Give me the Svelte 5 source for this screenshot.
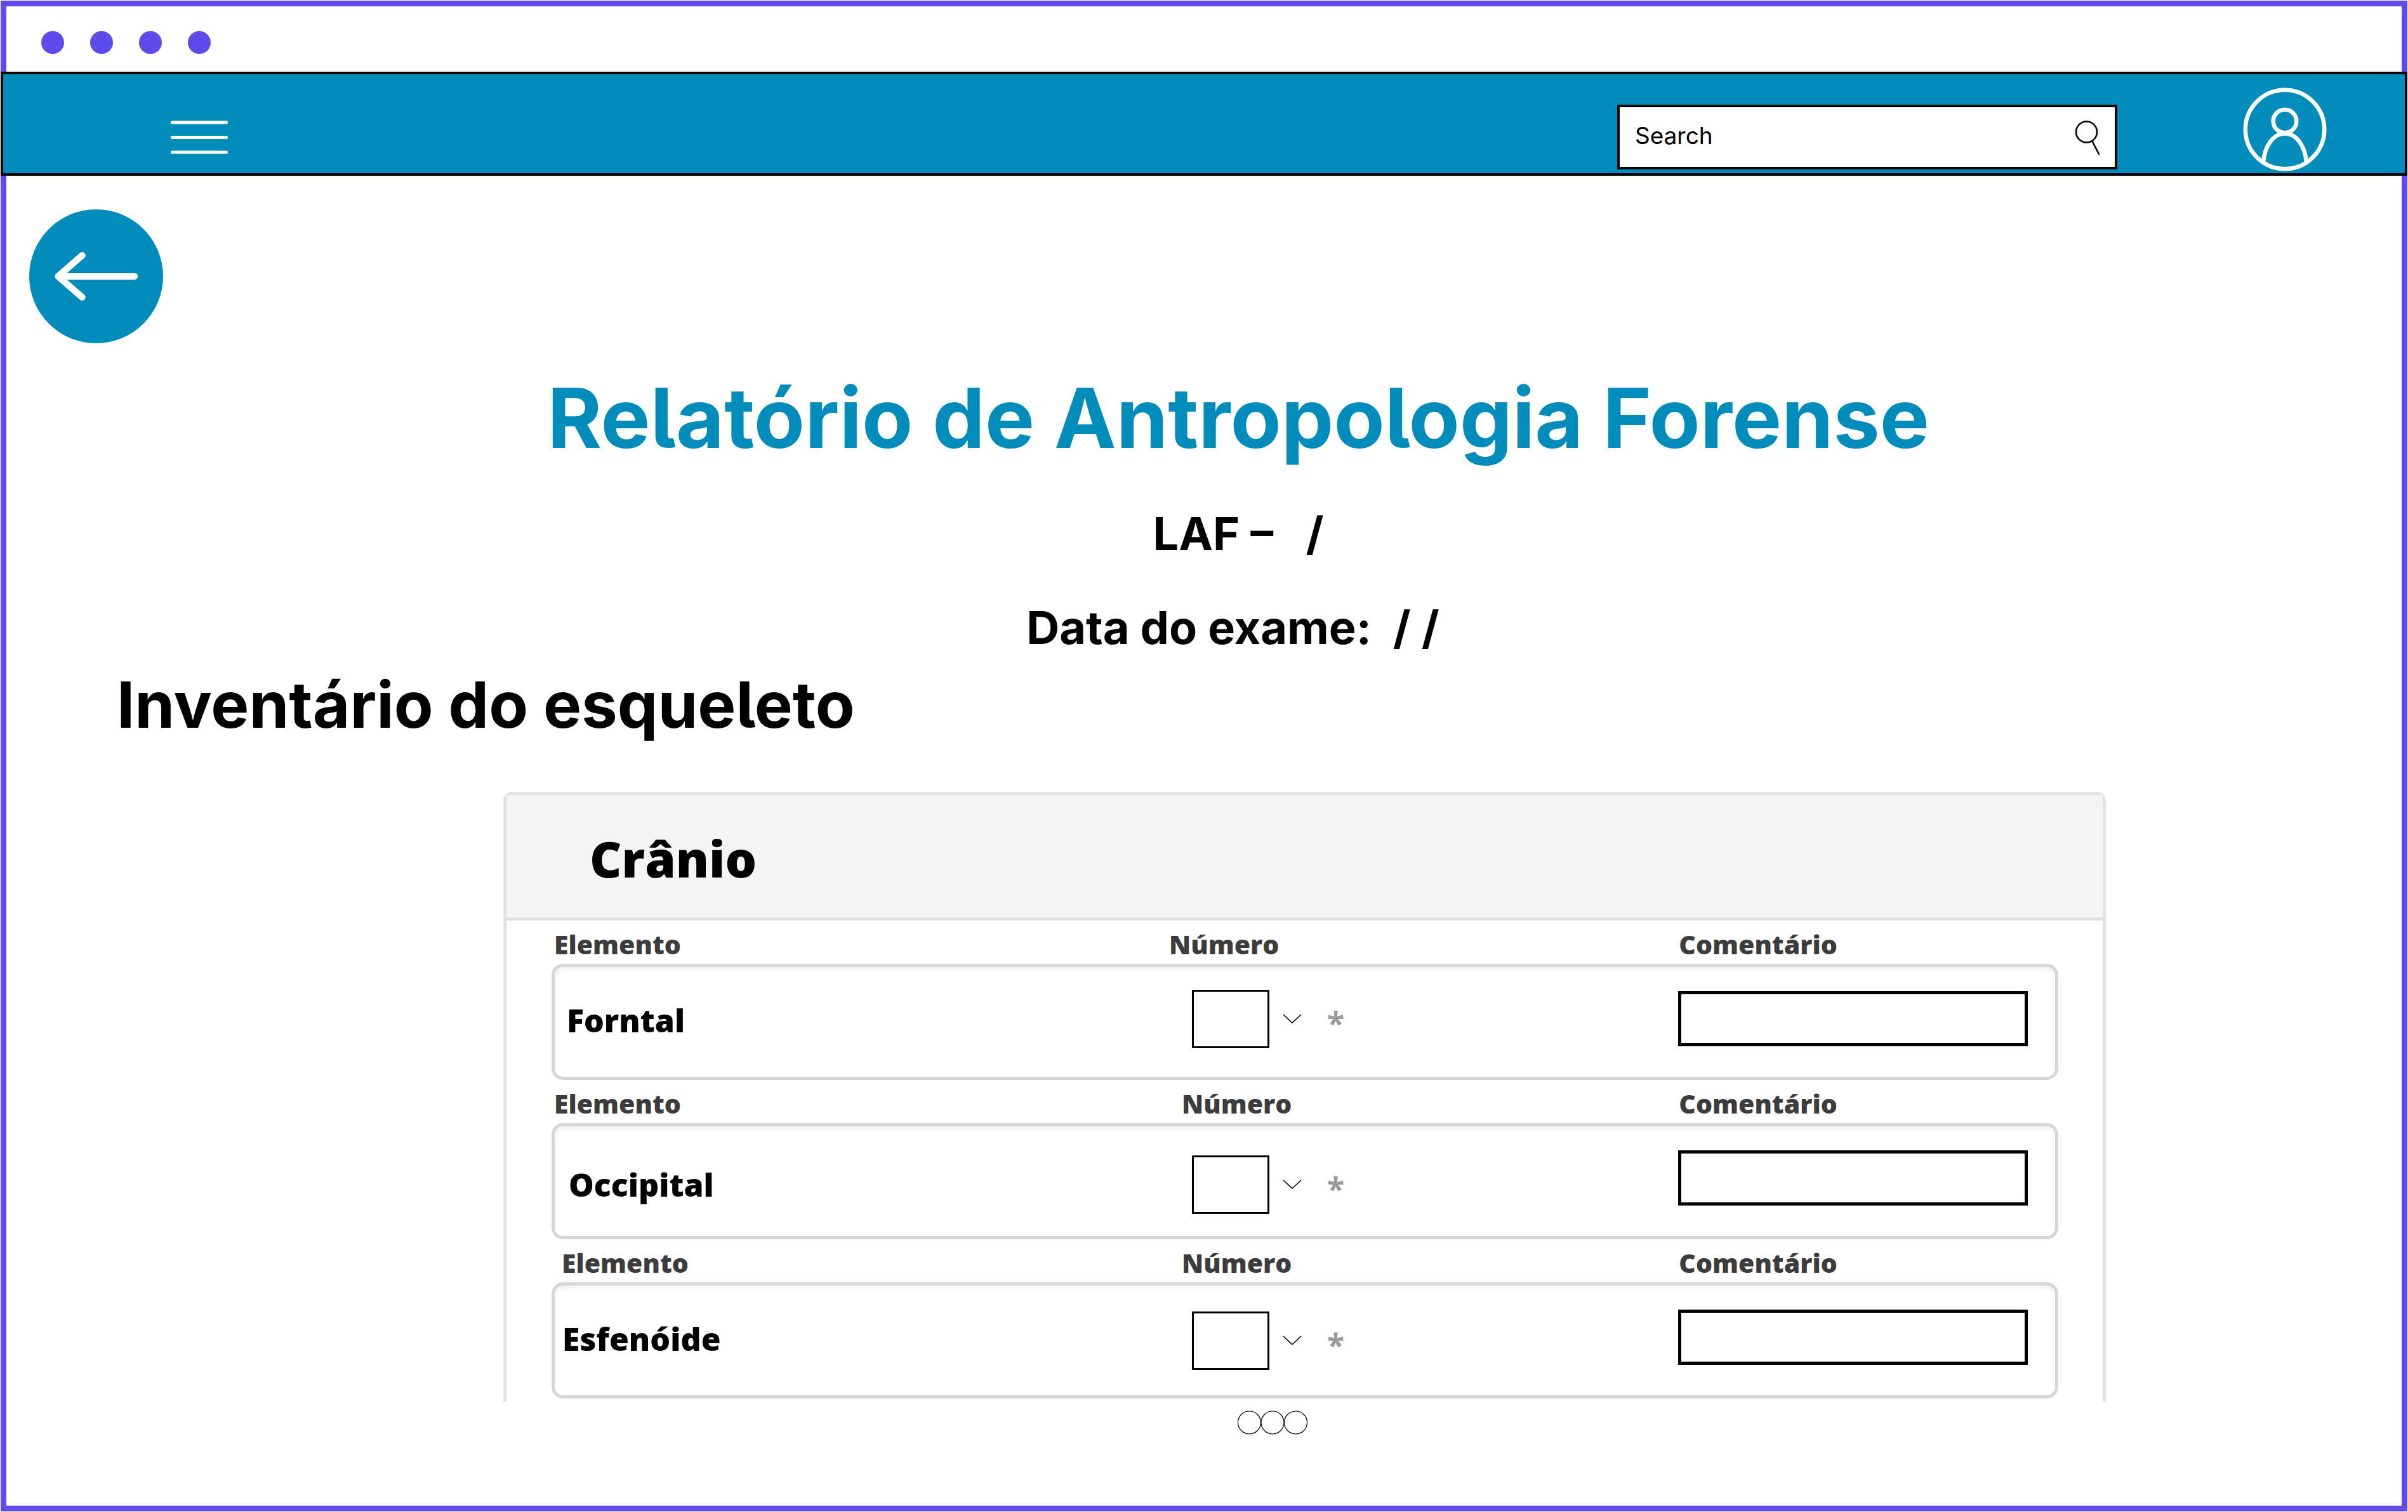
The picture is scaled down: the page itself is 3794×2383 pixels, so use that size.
<script>
  const windowDots = [0, 1, 2, 3];
  const moreDots = [18.5, 55, 91.5];
  const caseNumber = 'LAF –   /';
  const examDate = 'Data do exame:  / / ';

  const bones = [
    { id: 'frontal', name: 'Forntal' },
    { id: 'occipital', name: 'Occipital' },
    { id: 'esfenoide', name: 'Esfenóide' }
  ];
</script>

<div class="page">
  <div class="window">
    <div class="titlebar">
      {#each windowDots as dot (dot)}
        <span class="dot"></span>
      {/each}
    </div>

    <header class="navbar">
      <button class="icon-button menu" type="button" aria-label="Menu">
        <svg width="90" height="54" viewBox="0 0 90 54" fill="#fff">
          <rect x="0" y="0.5" width="90" height="5" rx="2" />
          <rect x="0" y="24" width="90" height="5" rx="2" />
          <rect x="0" y="47.5" width="90" height="5" rx="2" />
        </svg>
      </button>

      <form class="search" role="search">
        <input type="search" placeholder="Search" aria-label="Search" />
        <button class="icon-button" type="button" aria-label="Submit search">
          <svg width="40" height="58" viewBox="0 0 40 58" fill="none" stroke="#000" stroke-width="2.6" stroke-linecap="round">
            <circle cx="19.5" cy="21" r="16.5" />
            <path d="M28.5 35.5 L39 56" />
          </svg>
        </button>
      </form>

      <button class="icon-button" type="button" aria-label="Account">
        <svg width="132" height="132" viewBox="0 0 132 132" fill="none" stroke="#fff" stroke-width="6.6">
          <circle cx="66" cy="66" r="62.2" />
          <circle cx="66" cy="53" r="18.3" />
          <path d="M32 118 C34 93 47 72.500 66 72.500 C85 72.500 98 93 100 118" />
        </svg>
      </button>
    </header>

    <main>
      <a class="back" href="#voltar" aria-label="Voltar">
        <svg width="211" height="211" viewBox="0 0 211 211" fill="none" stroke="#fff" stroke-width="10.4" stroke-linecap="round" stroke-linejoin="round">
          <path d="M166 105.500 H45.500 M83.500 72.500 L45.500 105.500 L83.500 138.500" />
        </svg>
      </a>

      <div class="heading">
        <h1>Relatório de Antropologia Forense</h1>
        <p>{caseNumber}</p>
        <p>{examDate}</p>
      </div>

      <h2>Inventário do esqueleto</h2>

      <section class="card">
        <h3>Crânio</h3>
        {#each bones as bone (bone.id)}
          <div class="entry {bone.id}">
            <div class="labels">
              <span class="element" id="{bone.id}-elemento">Elemento</span>
              <label for="{bone.id}-numero">Número</label>
              <label for="{bone.id}-comentario">Comentário</label>
            </div>
            <div class="fields">
              <strong aria-labelledby="{bone.id}-elemento">{bone.name}</strong>
              <div class="number">
                <select id="{bone.id}-numero" required>
                  <option value=""></option>
                  <option value="1">1</option>
                  <option value="2">2</option>
                </select>
                <svg width="30" height="16" viewBox="0 0 30 16" fill="none" stroke="#000" stroke-width="1.6">
                  <path d="M1 1 L15 14 L29 1" />
                </svg>
                <span class="required">*</span>
              </div>
              <input class="comment" id="{bone.id}-comentario" type="text" />
            </div>
          </div>
        {/each}
      </section>

      <button class="icon-button more" type="button" aria-label="Mais elementos">
        <svg width="110" height="38" viewBox="0 0 110 38" fill="none" stroke="#000" stroke-width="1.2">
          {#each moreDots as cx (cx)}
            <circle {cx} cy="19" r="18" />
          {/each}
        </svg>
      </button>
    </main>
  </div>
</div>

<style>
  :global(body) {
    background: #fff;
  }

  .page,
  .page * {
    box-sizing: border-box;
  }

  .page {
    display: flex;
    min-height: 100vh;
    padding: 1px;
    color: #000;
    font-family: Inter, 'Liberation Sans', sans-serif;
    font-feature-settings: 'cv05' 1;
  }

  .window {
    flex: 1;
    min-width: 0;
    border: 9px solid #5f4aeb;
  }

  .titlebar {
    display: flex;
    align-items: center;
    gap: 41px;
    height: 103px;
    padding: 10px 55px 0;
  }

  .titlebar .dot {
    width: 36px;
    height: 36px;
    border-radius: 50%;
    background: #5f4aeb;
  }

  .navbar {
    display: flex;
    align-items: flex-end;
    height: 164px;
    margin: 0 -9px;
    padding: 0 123px 3px 264px;
    border: 4px solid #000;
    background: #008cbb;
  }

  .icon-button {
    display: block;
    padding: 0;
    border: 0;
    background: none;
    cursor: pointer;
  }

  .icon-button svg {
    display: block;
  }

  .menu {
    margin-right: auto;
    padding-bottom: 26px;
  }

  .search {
    display: flex;
    align-items: center;
    width: 23.2%;
    height: 102px;
    margin: 0 198px 3px 0;
    padding-right: 24px;
    border: 4px solid #000;
    background: #fff;
  }

  .search input {
    flex: 1;
    min-width: 0;
    height: 100%;
    padding: 0 0 6px 24px;
    border: 0;
    outline: 0;
    background: none;
    color: #000;
    font: 400 37px Inter, 'Liberation Sans', sans-serif;
  }

  .search input::placeholder {
    color: #000;
    opacity: 1;
  }

  main {
    padding: 53px 36px 0;
  }

  .back {
    display: block;
    width: 211px;
    height: 211px;
    border-radius: 50%;
    background: #008cbb;
  }

  .back svg {
    display: block;
  }

  .heading {
    padding: 38px 0 0 108px;
    text-align: center;
  }

  h1,
  h2,
  h3,
  p {
    margin: 0;
  }

  h1 {
    color: #008cbb;
    font-size: 131px;
    font-weight: 700;
    line-height: 160px;
  }

  p {
    margin-top: 56px;
    font-size: 72px;
    font-weight: 700;
    line-height: 92px;
    white-space: pre;
  }

  h2 {
    margin: 10px 0 73px 138px;
    font-size: 101px;
    font-weight: 700;
    line-height: 130px;
  }

  .card {
    width: 68.2%;
    margin-left: 747px;
    padding-bottom: 6px;
    border: 5px solid #e2e2e2;
    border-bottom: 0;
    border-radius: 14px 14px 0 0;
    font-family: 'Open Sans', 'Noto Sans', sans-serif;
  }

  h3 {
    height: 198px;
    padding: 46px 0 0 131px;
    border-bottom: 5px solid #e2e2e2;
    background: #f4f4f4;
    font-size: 78px;
    font-weight: 800;
    line-height: 108px;
  }

  .entry {
    padding: 0 70px 0 71px;
  }

  .labels,
  .fields {
    display: grid;
    grid-template-columns: 1005fr 767fr 594fr;
  }

  .labels {
    grid-template-columns: 990fr 784fr 598fr;
    align-items: end;
    height: 68px;
    padding: 0 0 3px 4px;
    color: #3c3c3c;
    font-size: 41px;
    font-weight: 800;
    line-height: 56px;
  }

  .frontal .labels {
    grid-template-columns: 970fr 804fr 598fr;
  }

  .esfenoide .element {
    padding-left: 12px;
  }

  .fields {
    align-items: center;
    height: 183px;
    border: 5px solid #d6d6d6;
    border-radius: 18px;
    box-shadow: inset 0 6px 8px -2px #eee;
  }

  strong {
    padding: 0 0 6px 19px;
    font-size: 50px;
    font-weight: 800;
    line-height: 68px;
  }

  .occipital strong {
    padding: 10px 0 0 22px;
  }

  .esfenoide strong {
    padding-left: 12px;
  }

  .number {
    display: flex;
    align-items: center;
  }

  .frontal .number {
    padding-bottom: 10px;
  }

  .occipital .number {
    padding-top: 10px;
  }

  select {
    width: 122px;
    height: 92px;
    margin-right: 21px;
    border: 3px solid #000;
    border-radius: 0;
    appearance: none;
    background: #fff;
    font: inherit;
  }

  .required {
    padding: 12px 0 0 40px;
    color: #999;
    font-size: 50px;
    font-weight: 700;
    line-height: 56px;
  }

  .comment {
    height: 87px;
    margin: 0 43px 10px 0;
    border: 5px solid #000;
    border-radius: 0;
    background: #fff;
    font-size: 41px;
  }

  .more {
    margin: 13px 0 0 1904px;
  }
</style>
